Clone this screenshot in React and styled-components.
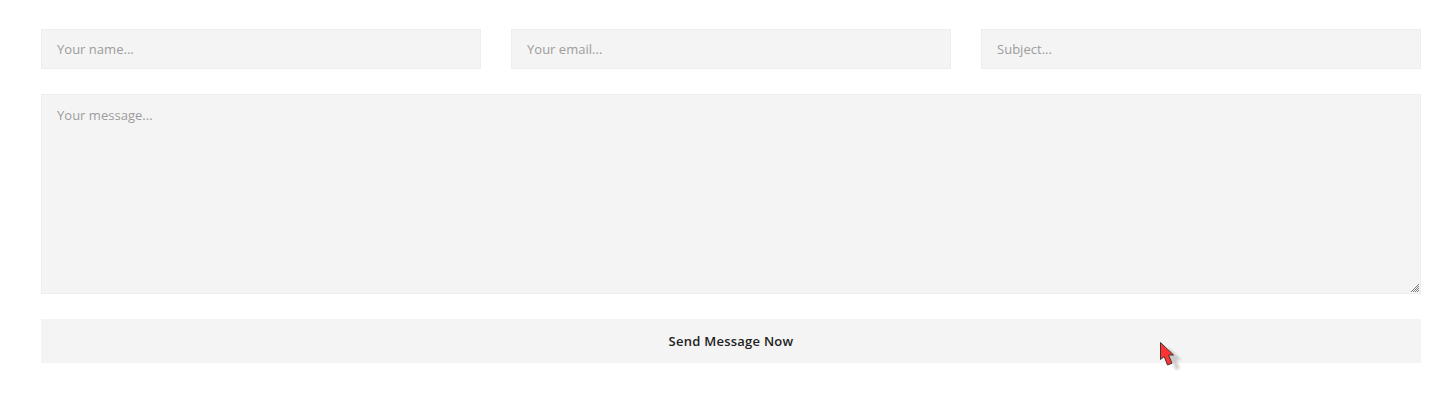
import React from "react";
import styled, { createGlobalStyle, css } from "styled-components";

const GlobalStyle = createGlobalStyle`
  * { box-sizing: border-box; }
  body { margin: 0; background: #fff; font-family: "Open Sans", sans-serif; }
`;

const Page = styled.main`
  position: relative;
  height: 403px;
  padding: 29px 21px 40px 41px;
  overflow: hidden;
`;

const Form = styled.form`
  display: flex;
  flex-direction: column;
  gap: 25px;
`;

const FieldRow = styled.div`
  display: grid;
  grid-template-columns: repeat(3, 1fr);
  gap: 30px;
`;

const fieldStyle = css`
  display: block;
  width: 100%;
  margin: 0;
  border: 1px solid #eee;
  border-radius: 0;
  background: #f4f4f4;
  color: #666;
  font: 400 13px/20px "Open Sans", sans-serif;
  letter-spacing: 0.02px;
  outline: none;
  &::placeholder { color: #9c9c9c; opacity: 1; }
`;

const TextField = styled.input`
  ${fieldStyle}
  height: 40px;
  padding: 9px 15px;
`;

const MessageArea = styled.div`
  position: relative;
`;

const MessageField = styled.textarea`
  ${fieldStyle}
  height: 200px;
  padding: 10px 15px;
  resize: none;
`;

const ResizeGrip = styled.svg`
  position: absolute;
  right: 1px;
  bottom: 1px;
  cursor: nwse-resize;
`;

const SubmitButton = styled.button`
  height: 44px;
  padding: 0;
  border: 0;
  background: #f4f4f4;
  color: #222;
  font: 600 13px/20px "Open Sans", sans-serif;
  letter-spacing: 0.25px;
`;

const Pointer = styled.svg`
  position: absolute;
  left: 1156px;
  top: 338px;
  pointer-events: none;
`;

const arrow = "M4.5 4.5V21.5L8.2 18.5L11.5 27L16 25.2L12.5 17H17.5Z";

export default function App() {
  return (
    <Page>
      <GlobalStyle />
      <Form>
        <FieldRow>
          <TextField placeholder="Your name..." />
          <TextField placeholder="Your email..." />
          <TextField placeholder="Subject..." />
        </FieldRow>
        <MessageArea>
          <MessageField placeholder="Your message..." />
          <ResizeGrip width="10" height="10" viewBox="0 0 10 10">
            <path d="M1 9L9 1M3 9L9 3M5 9L9 5M7 9L9 7" stroke="#808080" strokeWidth="1" />
          </ResizeGrip>
        </MessageArea>
        <SubmitButton type="button">Send Message Now</SubmitButton>
      </Form>
      <Pointer width="34" height="40" viewBox="0 0 34 40">
        <defs>
          <filter id="soft" x="-50%" y="-50%" width="200%" height="200%">
            <feGaussianBlur stdDeviation="1" />
          </filter>
        </defs>
        <path d={arrow} fill="#000" opacity=".17" filter="url(#soft)" transform="translate(8 5)" />
        <path d={arrow} fill="#f33" stroke="#433" strokeLinejoin="round" />
      </Pointer>
    </Page>
  );
}
